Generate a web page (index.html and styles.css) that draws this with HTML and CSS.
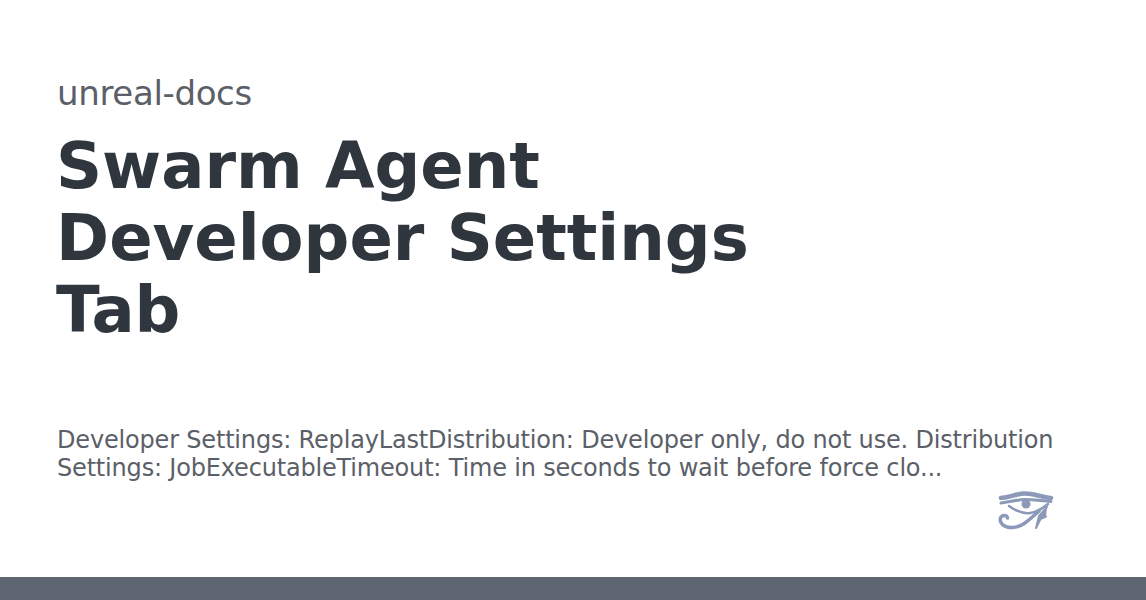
FILE: index.html
```html
<!DOCTYPE html>
<html lang="en">
<head>
<meta charset="utf-8">
<title>Swarm Agent Developer Settings Tab</title>
<link rel="stylesheet" href="styles.css">
</head>
<body>
<main class="card">
  <div class="content">
    <p class="site">unreal-docs</p>
    <h1 class="title">Swarm Agent<br>Developer Settings<br>Tab</h1>
    <p class="desc">Developer Settings: ReplayLastDistribution: Developer only, do not use. Distribution Settings: JobExecutableTimeout: Time in seconds to wait before force clo...</p>
    <div class="logo-row">
      <svg class="logo" width="56" height="40" viewBox="0 0 56 40" fill="none" stroke="#8c99b8" stroke-linecap="round" stroke-linejoin="round">
        <path d="M3 7 C13 6 19 2.500 27 2.500 C36 2.500 43 6 53 7" stroke-width="4.500"/>
        <path d="M3 12 C12 11 19 8.500 27 8.500 C36 8.500 44 10 53 10.500" stroke-width="3"/>
        <path d="M11 15 C18 20 25 23 32 22 C40 21 45 17 50 13" stroke-width="2.500"/>
        <circle cx="28" cy="13" r="4.500" fill="#8c99b8" stroke="none"/>
        <path d="M41 20 C33 27 25 36 15 36.500 C6 37 1 32 2.500 27 C4 23.500 9 24 9.500 27" stroke-width="3.500"/>
        <path d="M49 16 L41 25 L38 37 L42.500 28 L48 25.500" stroke-width="2" fill="#8c99b8"/>
      </svg>
    </div>
  </div>
  <div class="bar"></div>
</main>
</body>
</html>
```
FILE: styles.css
```css
* { box-sizing: border-box; }
html, body { margin: 0; padding: 0; }
body { background: #fff; font-family: "DejaVu Sans", sans-serif; }
.card { width: 1146px; height: 600px; display: flex; flex-direction: column; overflow: hidden; }
.content { flex: 1; padding: 72px 92px 0 57px; display: flex; flex-direction: column; }
.site { margin: 0; font-size: 34px; line-height: 42px; letter-spacing: -0.340px; color: #5b6068; }
.title { margin: 16px 0 0 -1px; width: 760px; font-size: 64px; line-height: 72px; font-weight: 700; color: #2f363d; }
.desc { margin: 80px 0 0; font-size: 24px; line-height: 28px; letter-spacing: -0.180px; color: #5b6068; }
.logo-row { display: flex; justify-content: flex-end; margin-top: 9px; }
.logo { display: block; }
.bar { height: 23px; background: #5c6570; }
```
